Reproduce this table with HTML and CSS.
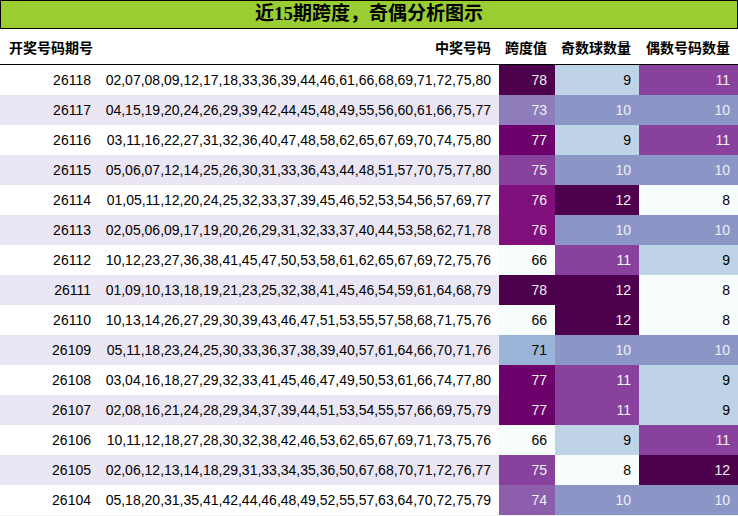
FILE: index.html
```html
<!DOCTYPE html>
<html lang="zh">
<head>
<meta charset="utf-8">
<title>近15期跨度，奇偶分析图示</title>
<link rel="stylesheet" href="styles.css">
</head>
<body>
<div class="title">近15期跨度，奇偶分析图示</div>
<table class="grid">
<colgroup>
<col class="c-period"><col class="c-nums"><col class="c-span"><col class="c-odd"><col class="c-even">
</colgroup>
<thead>
<tr><th class="left">开奖号码期号</th><th>中奖号码</th><th>跨度值</th><th>奇数球数量</th><th>偶数号码数量</th></tr>
</thead>
<tbody>
<tr><td>26118</td><td>02,07,08,09,12,17,18,33,36,39,44,46,61,66,68,69,71,72,75,80</td><td class="s78">78</td><td class="n9">9</td><td class="n11">11</td></tr>
<tr><td>26117</td><td>04,15,19,20,24,26,29,39,42,44,45,48,49,55,56,60,61,66,75,77</td><td class="s73">73</td><td class="n10">10</td><td class="n10">10</td></tr>
<tr><td>26116</td><td>03,11,16,22,27,31,32,36,40,47,48,58,62,65,67,69,70,74,75,80</td><td class="s77">77</td><td class="n9">9</td><td class="n11">11</td></tr>
<tr><td>26115</td><td>05,06,07,12,14,25,26,30,31,33,36,43,44,48,51,57,70,75,77,80</td><td class="s75">75</td><td class="n10">10</td><td class="n10">10</td></tr>
<tr><td>26114</td><td>01,05,11,12,20,24,25,32,33,37,39,45,46,52,53,54,56,57,69,77</td><td class="s76">76</td><td class="n12">12</td><td class="n8">8</td></tr>
<tr><td>26113</td><td>02,05,06,09,17,19,20,26,29,31,32,33,37,40,44,53,58,62,71,78</td><td class="s76">76</td><td class="n10">10</td><td class="n10">10</td></tr>
<tr><td>26112</td><td>10,12,23,27,36,38,41,45,47,50,53,58,61,62,65,67,69,72,75,76</td><td class="s66">66</td><td class="n11">11</td><td class="n9">9</td></tr>
<tr><td>26111</td><td>01,09,10,13,18,19,21,23,25,32,38,41,45,46,54,59,61,64,68,79</td><td class="s78">78</td><td class="n12">12</td><td class="n8">8</td></tr>
<tr><td>26110</td><td>10,13,14,26,27,29,30,39,43,46,47,51,53,55,57,58,68,71,75,76</td><td class="s66">66</td><td class="n12">12</td><td class="n8">8</td></tr>
<tr><td>26109</td><td>05,11,18,23,24,25,30,33,36,37,38,39,40,57,61,64,66,70,71,76</td><td class="s71">71</td><td class="n10">10</td><td class="n10">10</td></tr>
<tr><td>26108</td><td>03,04,16,18,27,29,32,33,41,45,46,47,49,50,53,61,66,74,77,80</td><td class="s77">77</td><td class="n11">11</td><td class="n9">9</td></tr>
<tr><td>26107</td><td>02,08,16,21,24,28,29,34,37,39,44,51,53,54,55,57,66,69,75,79</td><td class="s77">77</td><td class="n11">11</td><td class="n9">9</td></tr>
<tr><td>26106</td><td>10,11,12,18,27,28,30,32,38,42,46,53,62,65,67,69,71,73,75,76</td><td class="s66">66</td><td class="n9">9</td><td class="n11">11</td></tr>
<tr><td>26105</td><td>02,06,12,13,14,18,29,31,33,34,35,36,50,67,68,70,71,72,76,77</td><td class="s75">75</td><td class="n8">8</td><td class="n12">12</td></tr>
<tr><td>26104</td><td>05,18,20,31,35,41,42,44,46,48,49,52,55,57,63,64,70,72,75,79</td><td class="s74">74</td><td class="n10">10</td><td class="n10">10</td></tr>
</tbody>
</table>
</body>
</html>
```

FILE: styles.css
```css
html, body {
  margin: 0;
  padding: 0;
  background: #ffffff;
}
body {
  width: 738px;
  font-family: "Liberation Sans", "Noto Sans CJK SC", sans-serif;
  color: #000;
}
.title {
  box-sizing: border-box;
  width: 738px;
  height: 29px;
  border: 1px solid #000;
  background: #9acd32;
  text-align: center;
  font-family: "Liberation Serif", "Noto Sans CJK SC", serif;
  font-weight: bold;
  font-size: 19px;
  line-height: 26px;
  white-space: nowrap;
  overflow: hidden;
}
.grid {
  width: 738px;
  border-collapse: collapse;
  table-layout: fixed;
  font-size: 14px;
}
.c-period { width: 99px; }
.c-nums { width: 400px; }
.c-span { width: 56px; }
.c-odd { width: 84px; }
.c-even { width: 99px; }
.grid th {
  height: 35px;
  padding: 0 8px 0 0;
  text-align: right;
  font-family: "Noto Sans CJK SC", sans-serif;
  font-weight: bold;
  font-size: 14px;
  line-height: 20px;
  white-space: nowrap;
  border-bottom: 1px solid #000;
  vertical-align: middle;
}
.grid th.left {
  text-align: left;
  padding: 0 0 0 9px;
}
.grid td {
  height: 30px;
  padding: 0 8px 0 0;
  text-align: right;
  vertical-align: middle;
  white-space: nowrap;
  line-height: 30px;
}
.grid tbody tr:nth-child(even) td:nth-child(-n+2) {
  background: #ebe6f3;
}
.grid tbody tr:last-child td {
  border-bottom: 1px solid #eeeeee;
}
.s78 { background: #4d004b; color: #f1f1f1; }
.s77 { background: #6e016b; color: #f1f1f1; }
.s76 { background: #810f7c; color: #f1f1f1; }
.s75 { background: #88419d; color: #f1f1f1; }
.s74 { background: #8c5eab; color: #f1f1f1; }
.s73 { background: #8e7cbb; color: #f1f1f1; }
.s71 { background: #9ab4d8; color: #000; }
.s66 { background: #f7fcfd; color: #000; }
.n8 { background: #f7fcfd; color: #000; }
.n9 { background: #bfd3e6; color: #000; }
.n10 { background: #8c96c6; color: #eeeef4; }
.n11 { background: #88419d; color: #f1f1f1; }
.n12 { background: #4d004b; color: #f1f1f1; }
```
